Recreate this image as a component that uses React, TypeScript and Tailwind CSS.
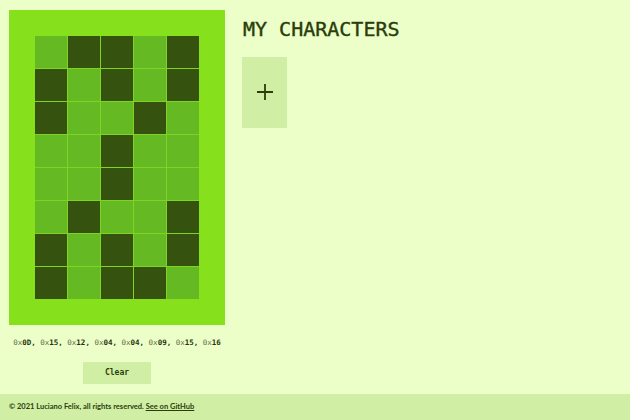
const rows = [0x0d, 0x15, 0x12, 0x04, 0x04, 0x09, 0x15, 0x16];

export default function App() {
  return (
    <div className="flex h-screen flex-col overflow-hidden bg-[#edffc8] text-[#2a3d0c]">
      <main className="flex flex-1 items-start">
        <section className="ml-[9px] mt-[10px] flex w-[216px] flex-col items-center">
          <div className="flex h-[315px] w-[216px] items-center justify-center bg-[#87e01c]">
            <div className="grid grid-cols-[repeat(5,32px)] grid-rows-[repeat(8,32px)] gap-px bg-[#7fd423]">
              {rows.flatMap((row, r) =>
                [4, 3, 2, 1, 0].map((bit) => (
                  <div
                    key={`${r}-${bit}`}
                    className={(row >> bit) & 1 ? "bg-[#35520e]" : "bg-[#65b923]"}
                  />
                )),
              )}
            </div>
          </div>
          <p className="mt-[12px] whitespace-nowrap text-[7.5px] leading-[12px] font-bold text-[#26330f] font-['DejaVu_Sans_Mono',monospace]">
            {rows.map((v, i) => (
              <span key={i}>
                <span className="font-normal text-[#5d6b4a]">0x</span>
                {v.toString(16).toUpperCase().padStart(2, "0")}
                {i < rows.length - 1 ? ", " : ""}
              </span>
            ))}
          </p>
          <button className="mt-[13px] h-[22px] w-[68px] bg-[#d0efa5] text-[8px] font-bold font-['DejaVu_Sans_Mono',monospace]">
            Clear
          </button>
        </section>
        <section className="ml-[17px] mt-[17px]">
          <h1 className="pl-px text-[20px] leading-[24px] font-normal [-webkit-text-stroke:0.4px_#2a3d0c] font-['DejaVu_Sans_Mono',monospace]">MY CHARACTERS</h1>
          <button className="mt-[16px] flex h-[71px] w-[45px] items-center justify-center bg-[#d0efa5] pb-[1px]" aria-label="Add">
            <svg width="16" height="16" viewBox="0 0 16 16" stroke="#2a3d0c" strokeWidth="1.8">
              <path d="M8 0v16M0 8h16" />
            </svg>
          </button>
        </section>
      </main>
      <footer className="flex h-[26px] items-center bg-[#d0efa5] pl-[9px] text-[7.5px] font-bold font-['Lato',sans-serif]">
        <span>© 2021 Luciano Felix, all rights reserved.&nbsp;</span>
        <a className="underline">See on GitHub</a>
      </footer>
    </div>
  );
}
